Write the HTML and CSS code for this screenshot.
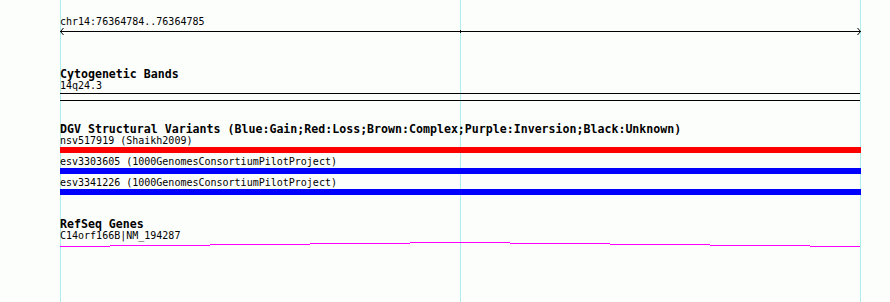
FILE: index.html
```html
<!DOCTYPE html>
<html>
<head>
<meta charset="utf-8">
<link rel="stylesheet" href="styles.css">
</head>
<body>
<div class="canvas">
  <div class="guide g1"></div>
  <div class="guide g2"></div>
  <div class="guide g3"></div>

  <div class="tracks">
    <section class="ruler">
      <div class="label">chr14:76364784..76364785</div>
      <svg class="ruler-svg" width="801" height="9" viewBox="0 0 801 9">
        <rect x="0" y="4" width="801" height="1" fill="#000"/>
        <polyline points="3.5,1 0.5,4.5 3.5,8" fill="none" stroke="#000" stroke-width="1"/>
        <polyline points="797.5,1 800.5,4.5 797.5,8" fill="none" stroke="#000" stroke-width="1"/>
        <rect x="400" y="3" width="1" height="3" fill="#000"/>
      </svg>
    </section>

    <section class="track cyto">
      <div class="title">Cytogenetic Bands</div>
      <div class="label">14q24.3</div>
      <div class="band-lines"></div>
    </section>

    <section class="track dgv">
      <div class="title">DGV Structural Variants (Blue:Gain;Red:Loss;Brown:Complex;Purple:Inversion;Black:Unknown)</div>
      <div class="feature">
        <div class="label">nsv517919 (Shaikh2009)</div>
        <div class="bar loss"></div>
      </div>
      <div class="feature">
        <div class="label">esv3303605 (1000GenomesConsortiumPilotProject)</div>
        <div class="bar gain"></div>
      </div>
      <div class="feature">
        <div class="label">esv3341226 (1000GenomesConsortiumPilotProject)</div>
        <div class="bar gain"></div>
      </div>
    </section>

    <section class="track refseq">
      <div class="title">RefSeq Genes</div>
      <div class="label">C14orf166B|NM_194287</div>
      <svg class="gene-svg" width="801" height="7" viewBox="0 0 801 7">
        <rect x="0" y="5" width="50" height="1" fill="#ff00ff"/>
        <rect x="50" y="4" width="100" height="1" fill="#ff00ff"/>
        <rect x="150" y="3" width="100" height="1" fill="#ff00ff"/>
        <rect x="250" y="2" width="100" height="1" fill="#ff00ff"/>
        <rect x="350" y="1" width="100" height="1" fill="#ff00ff"/>
        <rect x="450" y="2" width="100" height="1" fill="#ff00ff"/>
        <rect x="550" y="3" width="100" height="1" fill="#ff00ff"/>
        <rect x="650" y="4" width="100" height="1" fill="#ff00ff"/>
        <rect x="750" y="5" width="50" height="1" fill="#ff00ff"/>
      </svg>
    </section>
  </div>
</div>
</body>
</html>
```

FILE: styles.css
```css
html, body {
  margin: 0;
  padding: 0;
}

body {
  background: #fcfefc;
  font-family: "DejaVu Sans Mono", "Liberation Mono", monospace;
  color: #000;
  width: 890px;
  height: 302px;
  overflow: hidden;
}

.canvas {
  position: relative;
  width: 890px;
  height: 302px;
}

.tracks {
  position: relative;
  z-index: 1;
  margin-left: 60px;
  width: 801px;
  display: flex;
  flex-direction: column;
}

.label {
  font-size: 10px;
  line-height: 12px;
  height: 12px;
  white-space: nowrap;
}

.title {
  font-size: 11.6px;
  font-weight: bold;
  line-height: 12px;
  height: 12px;
  white-space: nowrap;
}

.ruler {
  padding-top: 16px;
  display: flex;
  flex-direction: column;
}

.ruler-svg {
  display: block;
  margin-top: -1px;
}

.track {
  display: flex;
  flex-direction: column;
}

.cyto {
  margin-top: 32px;
}

.band-lines {
  margin-top: 1px;
  width: 800px;
  height: 6px;
  border-top: 1px solid #000;
  border-bottom: 1px solid #000;
}

.dgv {
  margin-top: 22px;
}

.feature {
  display: flex;
  flex-direction: column;
}

.feature + .feature {
  margin-top: 3px;
}

.bar {
  width: 801px;
  height: 6px;
}

.bar.loss {
  background: #ff0000;
}

.bar.gain {
  background: #0000ff;
}

.refseq {
  margin-top: 23px;
}

.gene-svg {
  display: block;
  margin-top: -1px;
}

.guide {
  position: absolute;
  top: 0;
  bottom: 0;
  width: 1px;
  background: #aeeeee;
  z-index: 0;
}

.g1 { left: 60px; }
.g2 { left: 460px; }
.g3 { left: 860px; }
```
